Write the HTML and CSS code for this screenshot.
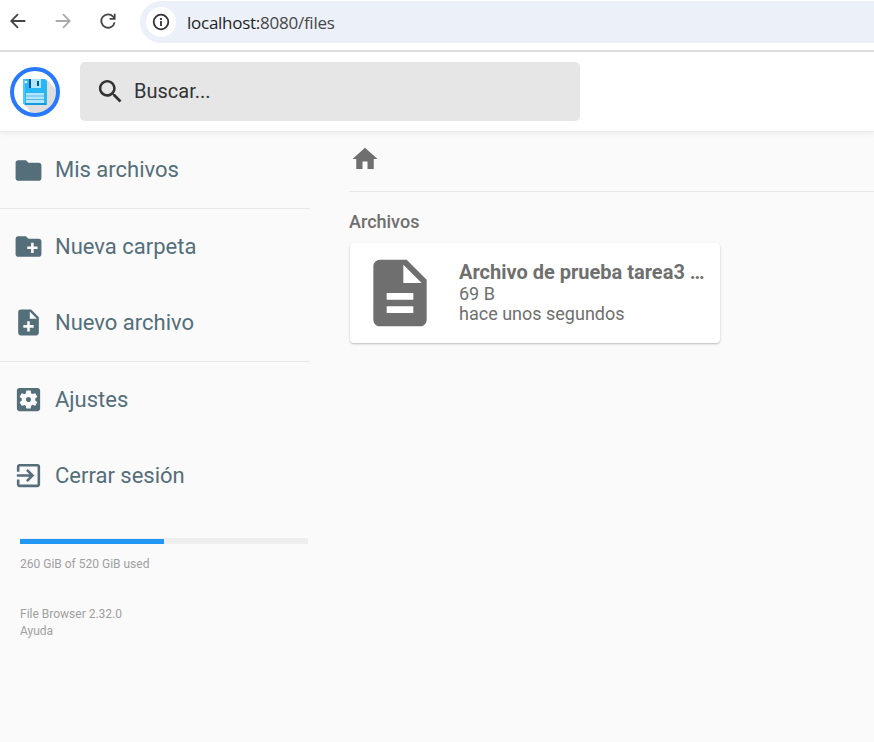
FILE: index.html
```html
<!DOCTYPE html>
<html lang="es">
<head>
<meta charset="utf-8">
<title>File Browser</title>
<link rel="stylesheet" href="styles.css">
</head>
<body>
<div class="toolbar">
  <svg class="nav" viewBox="0 0 16 16"><path d="M15.3 8H1.500M8 1.200 1.200 8 8 14.800"/></svg>
  <svg class="nav nav-off" viewBox="0 0 16 16"><path d="M.7 8h13.800M8 1.200 14.800 8 8 14.800"/></svg>
  <svg class="nav" viewBox="0 0 16 16"><path d="M14.600 9.400A6.700 6.700 0 1 1 13 3.500L14.600 5.300M14.700.8v5H9.600"/></svg>
  <div class="address">
    <span class="info"><svg viewBox="0 0 18 18"><circle cx="9" cy="9" r="7.300"/><path d="M9 8v5M9 5v2"/></svg></span>
    <span class="url"><b>localhost:</b>8080/files</span>
  </div>
</div>
<header class="header">
  <svg class="logo" viewBox="0 0 50 50">
    <circle cx="25" cy="25" r="23" fill="#fff"/>
    <path d="M37 13 48 25A23 23 0 0 1 23 48L14 37z" fill="#dedede"/>
    <path d="M13 12h22l2 2v24H15l-2-2z" fill="#29b6f6"/>
    <path d="M13 12h2v25h-2z" fill="#4fc9fa"/>
    <path d="M19 12h12v9H19z" fill="#b3e5fc"/>
    <path d="M19 12h2v9h-2zM27 14h2v5h-2z" fill="#01579b"/>
    <circle cx="16" cy="15" r="1.300" fill="#fff"/>
    <path d="M16 26h18v10H16z" fill="#b3e5fc"/>
    <path d="M16 29h18M16 32.500h18" stroke="#55b9e6" stroke-width="1"/>
    <path d="M15 37h21" stroke="#0288d1" stroke-width="1.200"/>
    <circle cx="25" cy="25" r="23" fill="none" stroke="#2979ff" stroke-width="4"/>
  </svg>
  <div class="search">
    <svg viewBox="0 0 24 24"><path d="M15.500 14h-.79l-.28-.27C15.410 12.590 16 11.110 16 9.500 16 5.910 13.090 3 9.500 3S3 5.910 3 9.500 5.910 16 9.500 16c1.610 0 3.090-.59 4.230-1.570l.27.28v.79l5 4.990L20.490 19l-4.990-5zm-6 0C7.010 14 5 11.990 5 9.500S7.010 5 9.500 5 14 7.010 14 9.500 11.990 14 9.500 14z"/></svg>
    <span>Buscar...</span>
  </div>
</header>
<div class="body">
  <nav class="sidebar">
    <div class="group">
      <a class="item"><svg viewBox="0 0 24 24"><path d="M10 4H4c-1.100 0-1.990.9-1.990 2L2 18c0 1.100.9 2 2 2h16c1.100 0 2-.9 2-2V8c0-1.100-.9-2-2-2h-8l-2-2z"/></svg>Mis archivos</a>
    </div>
    <div class="group">
      <a class="item"><svg viewBox="0 0 24 24"><path d="M20 6h-8l-2-2H4c-1.110 0-1.990.89-1.990 2L2 18c0 1.110.89 2 2 2h16c1.110 0 2-.89 2-2V8c0-1.110-.89-2-2-2zm-1 8h-3v3h-2v-3h-3v-2h3V9h2v3h3v2z"/></svg>Nueva carpeta</a>
      <a class="item"><svg viewBox="0 0 24 24"><path d="M14 2H6c-1.100 0-1.990.9-1.990 2L4 20c0 1.100.89 2 1.990 2H18c1.100 0 2-.9 2-2V8l-6-6zm2 14h-3v3h-2v-3H8v-2h3v-3h2v3h3v2zm-3-7V3.500L18.500 9H13z"/></svg>Nuevo archivo</a>
    </div>
    <div class="group">
      <a class="item"><svg viewBox="0 0 24 24"><path d="M12 10c-1.100 0-2 .9-2 2s.9 2 2 2 2-.9 2-2-.9-2-2-2zm7-7H5c-1.110 0-2 .9-2 2v14c0 1.100.89 2 2 2h14c1.110 0 2-.9 2-2V5c0-1.100-.89-2-2-2zm-1.750 9c0 .23-.02.46-.05.68l1.480 1.160c.13.11.17.3.08.45l-1.400 2.420c-.09.15-.27.21-.43.15l-1.740-.7c-.36.28-.76.51-1.180.69l-.26 1.850c-.03.17-.18.3-.35.3h-2.800c-.17 0-.32-.13-.35-.29l-.26-1.850c-.43-.18-.82-.41-1.180-.69l-1.740.7c-.16.06-.34 0-.43-.15l-1.400-2.420c-.09-.15-.05-.34.08-.45l1.480-1.160c-.03-.23-.05-.46-.05-.69s.02-.46.05-.68l-1.480-1.160c-.13-.11-.17-.3-.08-.45l1.400-2.420c.09-.15.27-.21.43-.15l1.740.7c.36-.28.76-.51 1.180-.69l.26-1.850c.03-.17.18-.3.35-.3h2.800c.17 0 .32.13.35.29l.26 1.850c.43.18.82.41 1.180.69l1.740-.7c.16-.06.34 0 .43.15l1.400 2.420c.09.15.05.34-.08.45l-1.480 1.160c.03.23.05.46.05.69z"/></svg>Ajustes</a>
      <a class="item"><svg viewBox="0 0 24 24"><path d="M10.090 15.590 11.500 17l5-5-5-5-1.410 1.410L12.670 11H3v2h9.670l-2.580 2.590zM19 3H5c-1.110 0-2 .9-2 2v4h2V5h14v14H5v-4H3v4c0 1.100.89 2 2 2h14c1.100 0 2-.9 2-2V5c0-1.100-.9-2-2-2z"/></svg>Cerrar sesión</a>
    </div>
    <div class="usage"><div class="used"></div></div>
    <p class="small quota">260 GiB of 520 GiB used</p>
    <p class="small">File Browser 2.32.0</p>
    <p class="small">Ayuda</p>
  </nav>
  <main class="main">
    <div class="crumbs"><svg viewBox="0 0 24 24"><path d="M10 20v-6h4v6h5v-8h3L12 3 2 12h3v8z"/></svg></div>
    <h2>Archivos</h2>
    <div class="card">
      <svg viewBox="0 0 24 24"><path d="M14 2H6c-1.100 0-1.990.9-1.990 2L4 20c0 1.100.89 2 1.990 2H18c1.100 0 2-.9 2-2V8l-6-6zm2 16H8v-2h8v2zm0-4H8v-2h8v2zm-3-5V3.500L18.500 9H13z"/></svg>
      <div class="meta">
        <p class="name">Archivo de prueba tarea3 …</p>
        <p>69 B</p>
        <p>hace unos segundos</p>
      </div>
    </div>
  </main>
</div>
</body>
</html>
```
FILE: styles.css
```css
* { box-sizing: border-box; margin: 0; }
body { height: 742px; overflow: hidden; display: flex; flex-direction: column; background: #fafafa; font-family: Roboto, sans-serif; color: #6f6f6f; }
svg { display: block; flex: none; fill: currentColor; }
.toolbar { height: 52px; flex: none; display: flex; align-items: flex-start; padding: 1px 0 0 10px; background: #fff; border-bottom: 2px solid #e0e0e0; }
.nav { width: 16px; height: 16px; margin: 12px 29px 0 0; fill: none; stroke: #444; stroke-width: 1.800; }
.nav-off { stroke: #aaa; }
.nav:nth-child(3) { margin-right: 24px; }
.address { flex: 1; height: 42px; display: flex; align-items: center; gap: 11px; padding-left: 6px; background: #ecf0f9; border-radius: 21px 0 0 21px; }
.info { width: 30px; height: 30px; display: grid; place-items: center; background: #fff; border-radius: 50%; }
.info svg { width: 18px; height: 18px; fill: none; stroke: #333; stroke-width: 1.800; }
.url { padding-top: 2px; font: 17px/24px "Open Sans", sans-serif; letter-spacing: -.26px; color: #474747; white-space: nowrap; }
.url b { font-weight: 400; color: #1f1f1f; }
.header { height: 80px; flex: none; display: flex; align-items: center; gap: 20px; padding-left: 10px; background: #fff; border-bottom: 1px solid #ececec; box-shadow: 0 1px 6px rgba(0,0,0,.07); }
.logo { width: 50px; height: 50px; margin-top: 1px; }
.search { width: 500px; height: 59px; display: flex; align-items: center; gap: 8.500px; padding: 0 0 2px 14.500px; background: #e6e6e6; border-radius: 5px; color: #333; font-size: 20px; }
.search svg { width: 31px; height: 31px; margin-top: 2px; }
.body { flex: 1; display: flex; }
.sidebar { width: 310px; flex: none; }
.group + .group { border-top: 1px solid #e8e8e8; }
.item { height: 76px; display: flex; align-items: center; gap: 11.500px; padding: 0 0 1px 12.500px; color: #546e7a; font-size: 22px; }
.group:first-child .item { padding-bottom: 2px; }
.item svg { width: 31px; height: 31px; margin: 0; }
.group:first-child svg { margin-top: 2px; }
.usage { width: 288px; height: 6px; margin: 24px 0 12px 20px; padding-top: 1px; background: #eee; }
.used { width: 50%; height: 5px; background: #2196f3; }
.small { margin-left: 20px; font-size: 12px; line-height: 17px; color: #a0a0a0; }
.quota { margin-bottom: 33px; }
.main { flex: 1; padding-left: 39px; }
.crumbs { height: 60px; padding: 12px 0 0 1px; border-bottom: 1px solid #e8e8e8; }
.crumbs svg { width: 30px; height: 30px; }
h2 { margin: 18px 0 9px; font-size: 18px; line-height: 24px; font-weight: 500; }
.card { width: 370px; height: 100px; display: flex; align-items: center; gap: 19px; margin-left: 1px; padding-left: 10px; background: #fff; border-radius: 4px; box-shadow: 0 1px 3px rgba(0,0,0,.10), 0 1px 2px rgba(0,0,0,.16); }
.card svg { width: 80px; height: 80px; }
.meta { font-size: 18px; line-height: 20px; white-space: nowrap; }
.name { margin-top: -1px; padding-bottom: 1px; font-size: 20px; line-height: 22px; font-weight: 700; }
```
